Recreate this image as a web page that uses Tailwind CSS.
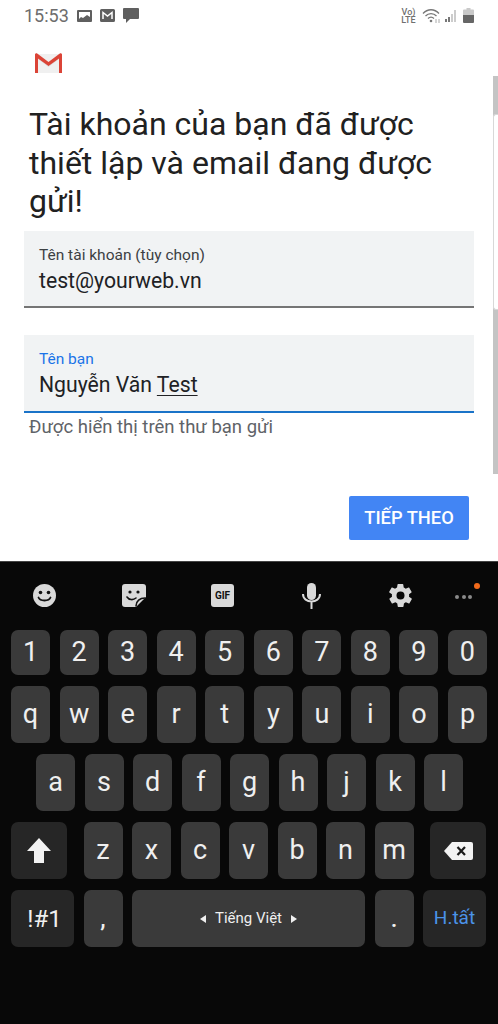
<!DOCTYPE html>
<html lang="vi">
<head>
  <meta charset="UTF-8">
  <meta name="viewport" content="width=device-width, initial-scale=1">
  <title>Gmail</title>
  <script src="https://cdn.jsdelivr.net/npm/@tailwindcss/browser@4"></script>
</head>
<body class="relative w-[498px] h-[1024px] overflow-hidden bg-white font-['Roboto',sans-serif]">

  <!-- status bar -->
  <div class="h-[31px] pl-6 pr-6 flex items-center text-[#6d6d6d]">
    <span class="text-[18px] leading-none">15:53</span>
    <div class="ml-[8px] flex items-center gap-[8px]">
      <svg class="w-[15px] h-[14px]" viewBox="0 0 15 14"><path fill="#5f5f5f" d="M1 1h13a1 1 0 0 1 1 1v10a1 1 0 0 1-1 1H1a1 1 0 0 1-1-1V2a1 1 0 0 1 1-1z"/><path fill="#fff" d="M2 3h11v5l-3-2-4 3-2-1-2 2z"/></svg>
      <svg class="w-[15px] h-[13px]" viewBox="0 0 15 13"><path fill="#5f5f5f" d="M1.500 0h12A1.500 1.500 0 0 1 15 1.500v10a1.500 1.500 0 0 1-1.500 1.500h-12A1.500 1.500 0 0 1 0 11.500v-10A1.500 1.500 0 0 1 1.500 0z"/><path fill="none" stroke="#fff" stroke-width="1.500" d="M3 10V3.500l4.500 3.500L12 3.500V10"/></svg>
      <svg class="w-[16px] h-[15px]" viewBox="0 0 16 15"><path fill="#5f5f5f" d="M1 0h14a1 1 0 0 1 1 1v9a1 1 0 0 1-1 1H7l-4 4v-4H1a1 1 0 0 1-1-1V1a1 1 0 0 1 1-1z"/></svg>
    </div>
    <div class="ml-auto flex items-center text-[#707070]">
      <div class="text-[9px] leading-[8px] font-medium text-center w-[15px]">Vo)<br>LTE</div>
      <svg class="ml-[6px] w-[20px] h-[15px]" viewBox="0 0 20 15"><path fill="none" stroke="#777" stroke-width="1.300" d="M1 5.500c4.500-5 11.500-5 16 0M3.500 8c3-3.200 8-3.200 11 0M6 10.500c1.800-1.700 4.200-1.700 6 0"/><circle cx="9" cy="13" r="1.300" fill="#777"/><path stroke="#aaa" d="M14 11v4M17 11v4"/></svg>
      <svg class="ml-[2px] w-[14px] h-[15px]" viewBox="0 0 14 15"><path fill="#777" d="M1 11h2v3H1zM4 9h2v5H4z"/><path fill="#ccc" d="M7 6h2v8H7zM10 2h2v12h-2z"/></svg>
      <svg class="ml-[5px] w-[11px] h-[15px]" viewBox="0 0 11 15"><path fill="#c9c9c9" d="M3.500 0h4v1.500H10a1 1 0 0 1 1 1V7H0V2.500a1 1 0 0 1 1-1h2.500z"/><path fill="#666" d="M0 7h11v7a1 1 0 0 1-1 1H1a1 1 0 0 1-1-1z"/></svg>
    </div>
  </div>

  <!-- scroll indicator -->
  <div class="absolute left-[493px] top-[76px] w-[5px] h-[398px] bg-[#c4c4c4]">
    <div class="mt-[38px] h-[196px] rounded-l-[3px] bg-white border border-r-0 border-[#d8d8d8]"></div>
  </div>

  <main class="h-[530px] flex flex-col">
    <svg class="ml-[35px] mt-[22px] w-[27px] h-[20px]" viewBox="0 0 27 20">
      <path fill="#f0f0f0" d="M2 1h23v19H2z"/>
      <path fill="#dcdcdc" d="M3 3l10.500 8L24 3v3L13.500 14 3 6z"/>
      <path fill="#db4437" d="M0 1.500C0 .5 1.200-.3 2.200.4L13.500 9 24.800.4c1-.7 2.200.1 2.200 1.100V20h-3V5.500L13.500 13 3 5.500V20H0z"/>
    </svg>

    <h1 class="ml-[29px] mt-[32px] text-[32px] leading-[38.500px] text-[#212121] font-normal whitespace-nowrap">Tài khoản của bạn đã được<br>thiết lập và email đang được<br>gửi!</h1>

    <div class="mx-6 mt-[10px] h-[77px] pl-[15px] pt-[15px] bg-[#f1f3f4] border-b-2 border-[#757575]">
      <div class="text-[15.500px] leading-[18px] text-[#3c4043]">Tên tài khoản (tùy chọn)</div>
      <div class="mt-[4px] text-[21.200px] leading-[26px] text-[#202124]">test@yourweb.vn</div>
    </div>

    <div class="mx-6 mt-[27px] h-[78px] pl-[15px] pt-[15px] bg-[#f1f3f4] border-b-2 border-[#1a73c8]">
      <div class="text-[15.500px] leading-[18px] text-[#1a73e8]">Tên bạn</div>
      <div class="mt-[4px] text-[21.200px] leading-[26px] text-[#202124]">Nguyễn Văn <span class="underline underline-offset-[3px] decoration-1">Test</span></div>
    </div>
    <div class="ml-[29px] mt-[3px] text-[18.500px] leading-[22px] text-[#5f6368] whitespace-nowrap">Được hiển thị trên thư bạn gửi</div>

    <div class="mt-[58px] mr-[29px] flex justify-end">
      <button class="w-[120px] h-[44px] rounded-[2px] bg-[#4285f4] text-white text-[18.300px] font-medium">TIẾP THEO</button>
    </div>
  </main>

  <!-- keyboard -->
  <div class="h-[463px] bg-[#080808] border-t border-[#444] px-[11px] text-[#efefef]">
    <!-- toolbar -->
    <div class="h-[68px] relative">
      <svg class="absolute left-[22px] top-[22px] w-[23px] h-[23px]" viewBox="0 0 23 23"><circle cx="11.500" cy="11.500" r="11.500" fill="#d9d9d9"/><circle cx="7.500" cy="8.500" r="1.800" fill="#111"/><circle cx="15.500" cy="8.500" r="1.800" fill="#111"/><path fill="none" stroke="#111" stroke-width="1.800" stroke-linecap="round" d="M5.500 13.500c1.500 4 10.500 4 12 0"/></svg>
      <svg class="absolute left-[111px] top-[22px] w-[24px] h-[23px]" viewBox="0 0 24 23"><path fill="#d9d9d9" d="M3 0h18a3 3 0 0 1 3 3v10L14 23H3a3 3 0 0 1-3-3V3a3 3 0 0 1 3-3z"/><circle cx="8" cy="8" r="1.600" fill="#111"/><circle cx="16" cy="8" r="1.600" fill="#111"/><path fill="none" stroke="#111" stroke-width="1.600" stroke-linecap="round" d="M5 13c2 3 6 3.500 9 1M14 22c0-5 4-8 9-8"/></svg>
      <div class="absolute left-[200px] top-[22px] w-[23px] h-[23px] rounded-[3px] bg-[#d9d9d9] text-[#111] text-[10px] leading-[23px] font-bold text-center">GIF</div>
      <svg class="absolute left-[290px] top-[21px] w-[21px] h-[26px]" viewBox="0 0 21 26"><rect x="6" y="0" width="9" height="17" rx="4.500" fill="#d9d9d9"/><path fill="none" stroke="#d9d9d9" stroke-width="2" d="M2 11c0 10 17 10 17 0M10.500 19v7"/></svg>
      <svg class="absolute left-[378px] top-[22px] w-[23px] h-[23px]" viewBox="2 2 20 20"><path fill="#d9d9d9" fill-rule="evenodd" d="M19.400 13c.04-.3.1-.7.1-1s-.06-.7-.1-1l2.100-1.650c.2-.15.250-.4.100-.65l-2-3.450c-.1-.2-.4-.3-.6-.2l-2.500 1c-.5-.4-1.050-.7-1.700-1l-.4-2.650c0-.2-.25-.4-.5-.4h-4c-.25 0-.45.2-.5.4l-.4 2.650c-.6.3-1.150.6-1.700 1l-2.500-1c-.2-.1-.5 0-.6.2l-2 3.450c-.1.250-.05.500.1.650L4.600 11c-.04.3-.1.7-.1 1s.06.7.1 1l-2.100 1.650c-.2.150-.250.400-.1.650l2 3.450c.1.200.4.300.6.200l2.500-1c.5.400 1.050.700 1.700 1l.4 2.650c.05.200.25.400.5.400h4c.25 0 .45-.200.5-.400l.4-2.650c.6-.300 1.150-.600 1.700-1l2.500 1c.2.100.5 0 .6-.200l2-3.450c.1-.250.05-.500-.1-.650zM12 15.500a3.500 3.500 0 1 1 0-7 3.500 3.500 0 0 1 0 7z"/></svg>
      <div class="absolute left-[444px] top-[33px] flex gap-[2.500px]">
        <span class="w-1 h-1 rounded-full bg-[#8a8a8a]"></span><span class="w-1 h-1 rounded-full bg-[#8a8a8a]"></span><span class="w-1 h-1 rounded-full bg-[#8a8a8a]"></span>
      </div>
      <span class="absolute left-[463px] top-[21px] w-[6px] h-[6px] rounded-full bg-[#f26a1b]"></span>
    </div>

    <div class="flex flex-col gap-[11px]">
      <!-- numbers -->
      <div class="grid grid-cols-10 gap-[9.500px] text-[27px]">
        <div class="h-[45px] rounded-[7px] bg-[#3a3a3a] flex items-center justify-center">1</div>
        <div class="h-[45px] rounded-[7px] bg-[#3a3a3a] flex items-center justify-center">2</div>
        <div class="h-[45px] rounded-[7px] bg-[#3a3a3a] flex items-center justify-center">3</div>
        <div class="h-[45px] rounded-[7px] bg-[#3a3a3a] flex items-center justify-center">4</div>
        <div class="h-[45px] rounded-[7px] bg-[#3a3a3a] flex items-center justify-center">5</div>
        <div class="h-[45px] rounded-[7px] bg-[#3a3a3a] flex items-center justify-center">6</div>
        <div class="h-[45px] rounded-[7px] bg-[#3a3a3a] flex items-center justify-center">7</div>
        <div class="h-[45px] rounded-[7px] bg-[#3a3a3a] flex items-center justify-center">8</div>
        <div class="h-[45px] rounded-[7px] bg-[#3a3a3a] flex items-center justify-center">9</div>
        <div class="h-[45px] rounded-[7px] bg-[#3a3a3a] flex items-center justify-center">0</div>
      </div>
      <!-- qwerty -->
      <div class="grid grid-cols-10 gap-[9.500px] text-[27px]">
        <div class="h-[57px] rounded-[7px] bg-[#3a3a3a] flex items-center justify-center">q</div>
        <div class="h-[57px] rounded-[7px] bg-[#3a3a3a] flex items-center justify-center">w</div>
        <div class="h-[57px] rounded-[7px] bg-[#3a3a3a] flex items-center justify-center">e</div>
        <div class="h-[57px] rounded-[7px] bg-[#3a3a3a] flex items-center justify-center">r</div>
        <div class="h-[57px] rounded-[7px] bg-[#3a3a3a] flex items-center justify-center">t</div>
        <div class="h-[57px] rounded-[7px] bg-[#3a3a3a] flex items-center justify-center">y</div>
        <div class="h-[57px] rounded-[7px] bg-[#3a3a3a] flex items-center justify-center">u</div>
        <div class="h-[57px] rounded-[7px] bg-[#3a3a3a] flex items-center justify-center">i</div>
        <div class="h-[57px] rounded-[7px] bg-[#3a3a3a] flex items-center justify-center">o</div>
        <div class="h-[57px] rounded-[7px] bg-[#3a3a3a] flex items-center justify-center">p</div>
      </div>
      <!-- asdf -->
      <div class="pl-[25px] flex gap-[9.500px] text-[27px]">
        <div class="w-[39px] h-[57px] rounded-[7px] bg-[#3a3a3a] flex items-center justify-center">a</div>
        <div class="w-[39px] h-[57px] rounded-[7px] bg-[#3a3a3a] flex items-center justify-center">s</div>
        <div class="w-[39px] h-[57px] rounded-[7px] bg-[#3a3a3a] flex items-center justify-center">d</div>
        <div class="w-[39px] h-[57px] rounded-[7px] bg-[#3a3a3a] flex items-center justify-center">f</div>
        <div class="w-[39px] h-[57px] rounded-[7px] bg-[#3a3a3a] flex items-center justify-center">g</div>
        <div class="w-[39px] h-[57px] rounded-[7px] bg-[#3a3a3a] flex items-center justify-center">h</div>
        <div class="w-[39px] h-[57px] rounded-[7px] bg-[#3a3a3a] flex items-center justify-center">j</div>
        <div class="w-[39px] h-[57px] rounded-[7px] bg-[#3a3a3a] flex items-center justify-center">k</div>
        <div class="w-[39px] h-[57px] rounded-[7px] bg-[#3a3a3a] flex items-center justify-center">l</div>
      </div>
      <!-- zxcv -->
      <div class="flex gap-[9.500px] text-[27px]">
        <div class="w-[56px] mr-[7px] h-[57px] rounded-[7px] bg-[#262626] flex items-center justify-center">
          <svg class="w-[24px] h-[25px]" viewBox="0 0 24 25"><path fill="#f2f2f2" d="M12 0l12 13h-7v12H7V13H0z"/></svg>
        </div>
        <div class="w-[39px] h-[57px] rounded-[7px] bg-[#3a3a3a] flex items-center justify-center">z</div>
        <div class="w-[39px] h-[57px] rounded-[7px] bg-[#3a3a3a] flex items-center justify-center">x</div>
        <div class="w-[39px] h-[57px] rounded-[7px] bg-[#3a3a3a] flex items-center justify-center">c</div>
        <div class="w-[39px] h-[57px] rounded-[7px] bg-[#3a3a3a] flex items-center justify-center">v</div>
        <div class="w-[39px] h-[57px] rounded-[7px] bg-[#3a3a3a] flex items-center justify-center">b</div>
        <div class="w-[39px] h-[57px] rounded-[7px] bg-[#3a3a3a] flex items-center justify-center">n</div>
        <div class="w-[39px] h-[57px] rounded-[7px] bg-[#3a3a3a] flex items-center justify-center">m</div>
        <div class="w-[56px] ml-[7px] h-[57px] rounded-[7px] bg-[#262626] flex items-center justify-center">
          <svg class="w-[29px] h-[18px]" viewBox="0 0 29 18"><path fill="#f2f2f2" d="M8 0h19a2 2 0 0 1 2 2v14a2 2 0 0 1-2 2H8L0 9z"/><path stroke="#1a1a1a" stroke-width="2.200" d="M13.500 5l7.500 8M21 5l-7.500 8"/></svg>
        </div>
      </div>
      <!-- bottom row -->
      <div class="flex gap-[9.500px]">
        <div class="w-[63px] h-[57px] pl-1 rounded-[7px] bg-[#262626] text-[24px] flex items-center justify-center">!#1</div>
        <div class="w-[39px] h-[57px] rounded-[7px] bg-[#3a3a3a] text-[24px] font-medium flex items-center justify-center">,</div>
        <div class="w-[233px] h-[57px] rounded-[7px] bg-[#3a3a3a] text-[15px] flex items-center justify-center gap-[9px]">
          <span class="w-0 h-0 border-y-[4px] border-y-transparent border-r-[6px] border-r-[#efefef]"></span>
          <span>Tiếng Việt</span>
          <span class="w-0 h-0 border-y-[4px] border-y-transparent border-l-[6px] border-l-[#efefef]"></span>
        </div>
        <div class="w-[39px] h-[57px] rounded-[7px] bg-[#3a3a3a] text-[24px] font-medium flex items-center justify-center">.</div>
        <div class="w-[63px] h-[57px] rounded-[7px] bg-[#262626] text-[19px] text-[#4b93e8] flex items-center justify-center">H.tất</div>
      </div>
    </div>
  </div>
</body>
</html>
